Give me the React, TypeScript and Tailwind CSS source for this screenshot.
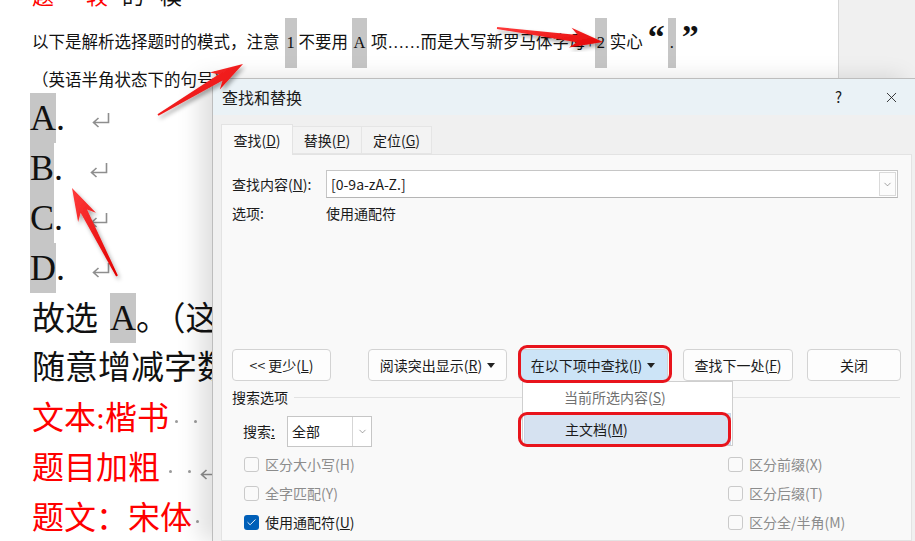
import { Check, ChevronDown, X } from "lucide-react";
import type { ReactNode } from "react";

type Pt = [number, number];

// builds a tapered arrow polygon from tail to tip
function arrowPoints(tail: Pt, tip: Pt, head = 26, barb = 10) {
  const [x1, y1] = tail;
  const [x2, y2] = tip;
  const len = Math.hypot(x2 - x1, y2 - y1);
  const ux = (x2 - x1) / len;
  const uy = (y2 - y1) / len;
  const nx = -uy;
  const ny = ux;
  const at = (d: number, w: number): string => `${x1 + ux * d + nx * w},${y1 + uy * d + ny * w}`;
  const neck = len - head;
  return [
    at(0, 1),
    at(neck, 3.6),
    at(neck - 7, barb),
    `${x2},${y2}`,
    at(neck - 7, -barb),
    at(neck, -3.6),
    at(0, -1),
  ].join(" ");
}

function Hl({ children, className = "" }: { children: ReactNode; className?: string }) {
  return <span className={`inline-block bg-[#c6c6c6] text-center ${className}`}>{children}</span>;
}

function ParaMark({ className = "" }: { className?: string }) {
  return (
    <svg width="20" height="16" viewBox="0 0 20 16" className={`inline-block ${className}`}>
      <path d="M17.5 1v9.5H3M7.5 6 2.5 10.5 7.5 15" fill="none" stroke="#8e8e8e" strokeWidth="1.6" />
    </svg>
  );
}

// word's space marks: small centred dots
function Dots({ count = 2, className = "" }: { count?: number; className?: string }) {
  return (
    <span className={`inline-flex gap-[16px] align-middle ${className}`}>
      {Array.from({ length: count }).map((_, i) => (
        <span key={i} className="h-[3px] w-[3px] rounded-full bg-[#9a9a9a]" />
      ))}
    </span>
  );
}

function Doc() {
  return (
    <div className="w-[838px] shrink-0 whitespace-nowrap font-['Liberation_Serif','Noto_Sans_CJK_SC',serif] text-[#111]">
      <div className="h-[18px] overflow-hidden pl-[32px]">
        <div className="-mt-[15px] text-[22px] leading-[24px]">
          <span className="text-[#ff0000]">题</span>
          <span className="ml-[32px] text-[#ff0000]">较</span>
          <span className="ml-[14px]">的</span>
          <span className="ml-[16px]">模</span>
        </div>
      </div>

      <div className="h-[50px] pl-[32px] text-[16.5px] leading-[50px]">
        以下是解析选择题时的模式，注意
        <Hl className="ml-[5px] w-[12px]">1</Hl>
        <span className="ml-[2px]">不要用</span>
        <Hl className="ml-[4px] w-[15px]">A</Hl>
        <span className="ml-[4px]">项……而是大写新罗马体字母+</span>
        <Hl className="w-[12px]">2</Hl>
        <span className="ml-[3px]">实心</span>
        <span className="ml-[5px] text-[34px] font-bold leading-none">“</span>
        <Hl className="ml-[3px] w-[8px]">.</Hl>
        <span className="ml-[6px] text-[34px] font-bold leading-none">”</span>
      </div>

      <div className="h-[25px] pl-[32px] text-[16.5px] leading-[25px]">（英语半角状态下的句号）</div>

      {["A", "B", "C", "D"].map((letter) => (
        <div key={letter} className="h-[50px] pl-[30px] text-[36px] leading-[50px]">
          <Hl>{letter}</Hl>.
          <ParaMark className="relative -top-[2px] ml-[26px] align-middle" />
        </div>
      ))}

      <div className="h-[50px] pl-[32px] text-[33px] leading-[50px]">
        故选
        <Hl className="ml-[12px] text-[36px]">A</Hl>。（这里
      </div>
      <div className="h-[50px] pl-[32px] text-[33px] leading-[50px]">随意增减字数</div>

      <div className="h-[50px] pl-[32px] text-[32px] leading-[50px] text-[#ff0000]">
        文本:楷书
        <Dots className="ml-[6px]" />
      </div>
      <div className="h-[50px] pl-[32px] text-[32px] leading-[50px] text-[#ff0000]">
        题目加粗
        <Dots className="ml-[9px]" />
        <ParaMark className="ml-[8px] align-middle" />
      </div>
      <div className="h-[50px] pl-[32px] text-[32px] leading-[50px] text-[#ff0000]">
        题文：宋体
        <Dots count={1} className="ml-[4px]" />
      </div>
    </div>
  );
}

function Btn({ children, className = "" }: { children: ReactNode; className?: string }) {
  return (
    <div className={`flex h-[32px] items-center justify-center rounded-[4px] border border-[#d3d3d3] ${className}`}>
      {children}
    </div>
  );
}

function Caret() {
  return (
    <svg width="8" height="5" viewBox="0 0 8 5" className="ml-[5px]">
      <path d="M0 0h8L4 5z" fill="#222" />
    </svg>
  );
}

function Box({ checked = false }: { checked?: boolean }) {
  if (checked) {
    return (
      <span className="flex h-[15px] w-[15px] items-center justify-center rounded-[3px] bg-[#005fb8]">
        <Check size={11} strokeWidth={2} color="#ffffff" />
      </span>
    );
  }
  return <span className="h-[15px] w-[15px] rounded-[3px] border border-[#cacaca] bg-[#fafafa]" />;
}

function Option({ label, checked = false }: { label: ReactNode; checked?: boolean }) {
  return (
    <div className="flex items-center">
      <Box checked={checked} />
      <span className={`ml-[6px] ${checked ? "text-[#1b1b1b]" : "text-[#8c8c8c]"}`}>{label}</span>
    </div>
  );
}

function Dialog() {
  return (
    <div className="absolute left-[212px] top-[78px] flex h-[463px] w-[703px] flex-col border-l border-t border-[#bdbdbd] bg-[#f0f0f0] font-['Noto_Sans_CJK_SC','Noto_Sans',sans-serif] text-[14px] text-[#1b1b1b] shadow-[-12px_0_22px_rgba(0,0,0,0.13)]">
      <div className="flex h-[36px] shrink-0 items-center bg-[#eaf2f6] pl-[9px]">
        <span className="text-[16px]">查找和替换</span>
        <span className="ml-auto text-[15px]">?</span>
        <X size={17} strokeWidth={1.2} className="ml-[41px] mr-[15px]" />
      </div>

      <div className="mt-[9px] flex h-[30px] shrink-0 items-end pl-[8px]">
        <div className="relative z-10 -mb-px flex h-[31px] w-[72px] items-center justify-center border border-b-0 border-[#e3e3e3] bg-[#f9f9f9]">
          查找(<u>D</u>)
        </div>
        <div className="flex h-[28px] w-[69px] items-center justify-center border border-l-0 border-[#e5e5e5] bg-[#f3f3f3]">
          替换(<u>P</u>)
        </div>
        <div className="flex h-[28px] w-[70px] items-center justify-center border border-l-0 border-[#e5e5e5] bg-[#f3f3f3]">
          定位(<u>G</u>)
        </div>
      </div>

      <div className="relative ml-[8px] w-[691px] flex-1 border border-[#e3e3e3] bg-[#f9f9f9] pl-[10px] pt-[15px]">
        <div className="flex items-center">
          <span className="w-[94px]">
            查找内容(<u>N</u>):
          </span>
          <div className="flex h-[28px] w-[572px] items-center border border-[#c6c6c6] border-b-[#b5b5b5] bg-white pl-[4px]">
            <span>[0-9a-zA-Z.]</span>
            <span className="ml-auto mr-px flex h-[24px] w-[17px] items-center justify-center border border-[#dadada] bg-[#fcfcfc]">
              <ChevronDown size={11} strokeWidth={1.3} color="#666" />
            </span>
          </div>
        </div>
        <div className="mt-[5px] flex h-[20px] items-center">
          <span className="w-[94px]">选项:</span>
          <span>使用通配符</span>
        </div>

        <div className="mt-[126px] flex">
          <Btn className="w-[99px] bg-[#fdfdfd]">
            &lt;&lt; 更少(<u>L</u>)
          </Btn>
          <Btn className="ml-[37px] w-[139px] bg-[#fdfdfd]">
            阅读突出显示(<u>R</u>)
            <Caret />
          </Btn>
          <Btn className="ml-[11px] w-[150px] border-[#9ec3e6] bg-[#cce4f7]">
            在以下项中查找(<u>I</u>)
            <Caret />
          </Btn>
          <Btn className="ml-[15px] w-[110px] bg-[#fdfdfd]">
            查找下一处(<u>F</u>)
          </Btn>
          <Btn className="ml-[14px] w-[94px] bg-[#fdfdfd]">关闭</Btn>
        </div>

        <div className="mt-[6px] flex h-[20px] items-center">
          <span>搜索选项</span>
          <span className="ml-[6px] mr-[11px] h-px flex-1 bg-[#e2e2e2]" />
        </div>

        <div className="mt-[9px] flex h-[31px] items-center pl-[11px]">
          <span className="w-[44px]">
            搜索<u>:</u>
          </span>
          <div className="flex h-[31px] w-[85px] items-center border border-[#c6c6c6] bg-white">
            <span className="flex-1 pl-[4px]">全部</span>
            <span className="flex h-full w-[19px] items-center justify-center border-l border-[#d6d6d6]">
              <ChevronDown size={11} strokeWidth={1.3} color="#666" />
            </span>
          </div>
        </div>

        <div className="mt-[6px] flex flex-col gap-[7px] pl-[12px]">
          <div className="flex h-[22px] items-center">
            <div className="w-[484px]">
              <Option label="区分大小写(H)" />
            </div>
            <Option label="区分前缀(X)" />
          </div>
          <div className="flex h-[22px] items-center">
            <div className="w-[484px]">
              <Option label="全字匹配(Y)" />
            </div>
            <Option label="区分后缀(T)" />
          </div>
          <div className="flex h-[22px] items-center">
            <div className="w-[484px]">
              <Option
                checked
                label={
                  <>
                    使用通配符(<u>U</u>)
                  </>
                }
              />
            </div>
            <Option label="区分全/半角(M)" />
          </div>
        </div>
      </div>

      <div className="absolute left-[309px] top-[302px] z-20 flex h-[65px] w-[211px] flex-col border border-[#cfcfcf] bg-white">
        <div className="flex h-[31px] items-center pl-[41px] text-[#707070]">
          当前所选内容(<u>S</u>)
        </div>
        <div className="mx-px flex h-[32px] items-center border border-[#c7d5e8] bg-[#d6e2f1] pl-[40px]">
          主文档(<u>M</u>)
        </div>
      </div>

      <div className="absolute left-[305px] top-[266px] z-30 h-[38px] w-[154px] rounded-[9px] border-[3px] border-[#e8141c]" />
      <div className="absolute left-[305px] top-[333px] z-30 h-[35px] w-[213px] rounded-[9px] border-[3px] border-[#e8141c]" />
    </div>
  );
}

function Arrows() {
  const arrows: [Pt, Pt][] = [
    [[158, 115], [243, 64]],
    [[497, 28], [603, 42]],
    [[117, 276], [72, 188]],
  ];
  return (
    <svg width="915" height="541" viewBox="0 0 915 541" className="pointer-events-none absolute left-0 top-0 z-40">
      <defs>
        <linearGradient id="red" x1="0" y1="0" x2="1" y2="1">
          <stop offset="0" stopColor="#ff3b3b" />
          <stop offset="1" stopColor="#e10000" />
        </linearGradient>
        <filter id="shade" x="-20%" y="-20%" width="140%" height="140%">
          <feDropShadow dx="2" dy="3" stdDeviation="2" floodColor="#000" floodOpacity="0.35" />
        </filter>
      </defs>
      {arrows.map(([tail, tip], i) => (
        <polygon key={i} points={arrowPoints(tail, tip)} fill="url(#red)" filter="url(#shade)" />
      ))}
    </svg>
  );
}

export default function App() {
  return (
    <div className="relative h-[541px] w-[915px] overflow-hidden bg-white">
      <div className="flex h-full">
        <Doc />
        <div className="h-[78px] w-[77px] shrink-0 border-l border-[#d6d6d6] bg-[#f0f0f0]" />
      </div>
      <Dialog />
      <Arrows />
    </div>
  );
}
